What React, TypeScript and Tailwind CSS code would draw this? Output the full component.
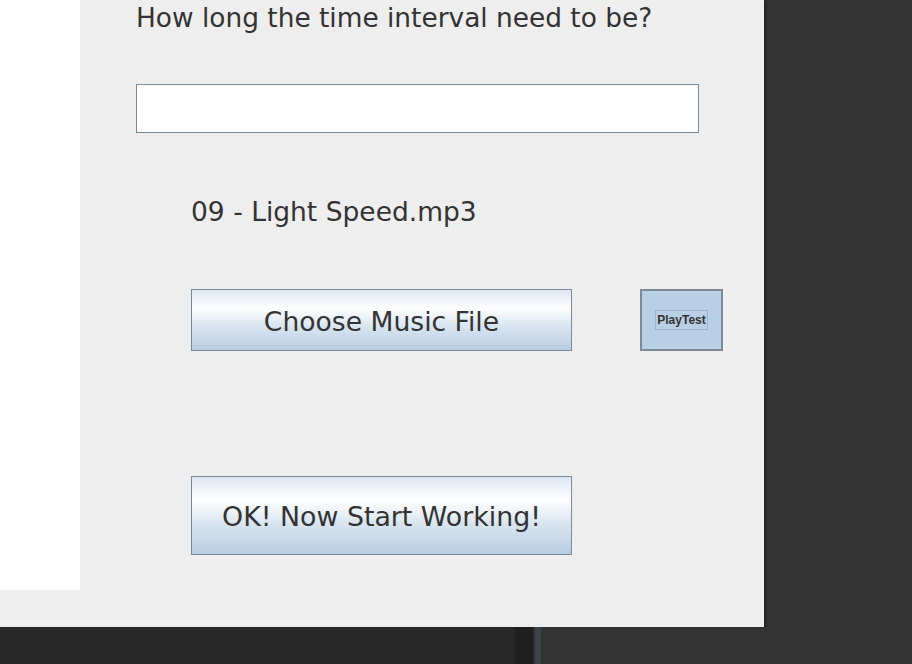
import React from "react"

const font = { fontFamily: '"DejaVu Sans", Verdana, sans-serif' }

function GradientButton({ label, h }: { label: string; h: string }) {
  return (
    <button
      className={`w-[381px] ${h} pt-[3px] border border-[#7a8a99] bg-[linear-gradient(to_bottom,#dde7f2_0%,#ffffff_30%,#d9e5f0_60%,#b8cee4_100%)] text-[#333333] flex items-center justify-center`}
    >
      {label}
    </button>
  )
}

export default function App() {
  return (
    <div className="w-[912px] h-[664px] overflow-hidden bg-[#333333] flex flex-col" style={font}>
      <div className="flex h-[627px]">
        {/* app window */}
        <div className="w-[764px] h-[627px] bg-[#eeeeee] flex shadow-[1px_1px_3px_rgba(0,0,0,0.5)] text-[#333333]">
          <div className="w-[80px] h-[590px] bg-white shrink-0" />
          <div className="ml-[56px] flex flex-col">
            <div className="text-[26.4px] leading-[34px] mt-[1px]">
              How long the time interval need to be?
            </div>
            <input className="mt-[49px] w-[563px] h-[49px] border border-[#7a8a99] bg-white outline-none" />
            <div className="ml-[55px] mt-[62px] text-[26.5px] leading-[34px]">
              09 - Light Speed.mp3
            </div>
            <div className="ml-[55px] mt-[60px] flex items-start gap-[68px]">
              <div className="text-[26.6px]">
                <GradientButton label="Choose Music File" h="h-[62px]" />
              </div>
              <button className="w-[83px] h-[62px] bg-[#b8cfe5] border-2 border-[#7c8a99] flex items-center justify-center">
                <span
                  className="border border-[#9fb4c8] px-[1px] h-[20px] flex items-center text-[12px] font-bold text-[#333333]"
                  style={{ fontFamily: '"Liberation Sans", Arial, sans-serif' }}
                >
                  PlayTest
                </span>
              </button>
            </div>
            <div className="ml-[55px] mt-[125px] text-[26.8px]">
              <GradientButton label="OK! Now Start Working!" h="h-[79px]" />
            </div>
          </div>
        </div>
      </div>
      <div className="flex h-[37px]">
        <div className="w-[515px] bg-[#282828]" />
        <div className="w-[18px] bg-[#1f1f1f]" />
        <div className="w-[2px] bg-[#2a2d31]" />
        <div className="w-[6px] bg-[#3d4248]" />
        <div className="flex-1 bg-[#333333]" />
      </div>
    </div>
  )
}
